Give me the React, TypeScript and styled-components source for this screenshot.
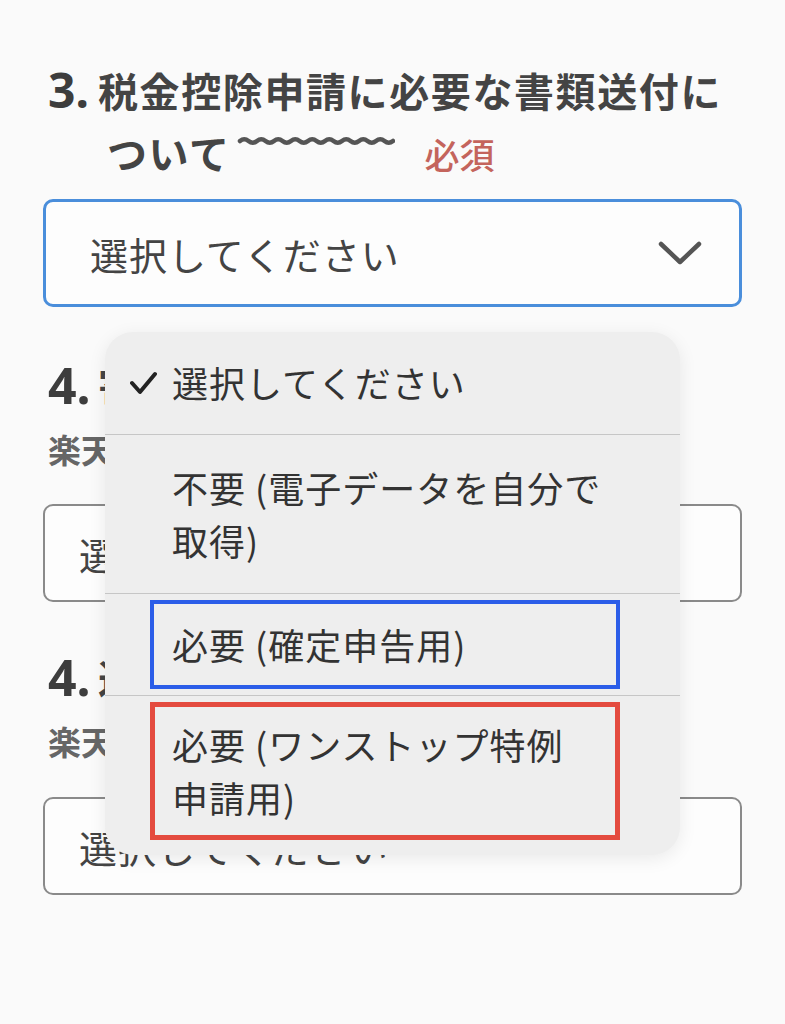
import React from "react";
import styled, { createGlobalStyle } from "styled-components";

const Global = createGlobalStyle`
  html, body { margin: 0; padding: 0; background: #fafafa; }
  body { font-family: "Noto Sans CJK JP", "Noto Sans", sans-serif; color: #444; }
`;

const Page = styled.div`
  position: relative;
  width: 785px;
  min-height: 1024px;
  box-sizing: border-box;
  padding: 59px 43px 0 43px;
  background: #fafafa;
`;

const Heading = styled.div<{ $mt?: number }>`
  display: flex;
  align-items: flex-start;
  line-height: 62px;
  margin-top: ${(p) => p.$mt ?? 0}px;
`;

const Num = styled.span<{ $size?: number }>`
  flex: 0 0 50px;
  padding-left: 5px;
  font-family: "Noto Sans", "Noto Sans CJK JP", sans-serif;
  font-size: ${(p) => p.$size ?? 48}px;
  font-weight: 700;
  color: #3d3d3d;
`;

const Title = styled.div`
  font-size: 40px;
  font-weight: 700;
  letter-spacing: 1.6px;
  color: #444;
  white-space: nowrap;
`;

const Line = styled.span`
  padding-left: 9px;
`;

const Wave = styled.svg`
  display: inline-block;
  vertical-align: 22px;
  margin-left: 6px;
`;

const Required = styled.span`
  margin-left: 30px;
  font-size: 35px;
  font-weight: 500;
  letter-spacing: 0;
  color: #c4645c;
`;

const Sub = styled.div`
  margin-top: 10px;
  padding-left: 5px;
  line-height: 46px;
  font-size: 33px;
  font-weight: 700;
  color: #666;
  white-space: nowrap;
`;

const Select = styled.div<{ $active?: boolean; $mt: number }>`
  box-sizing: border-box;
  height: ${(p) => (p.$active ? 108 : 98)}px;
  margin-top: ${(p) => p.$mt}px;
  border: ${(p) => (p.$active ? "3px solid #4a8edb" : "2px solid #8a8a8a")};
  border-radius: 10px;
  background: #fdfdfd;
  display: flex;
  align-items: center;
  justify-content: space-between;
  padding: 0 37px 0 ${(p) => (p.$active ? 44 : 34)}px;
  font-size: 38px;
  letter-spacing: 1px;
  color: #444;
`;

const Menu = styled.div`
  position: absolute;
  left: 105px;
  top: 332px;
  width: 575px;
  background: #eeeeee;
  border-radius: 28px;
  overflow: hidden;
  box-shadow: 0 4px 18px rgba(0, 0, 0, 0.08);
  padding-bottom: 15px;
  font-size: 36px;
  letter-spacing: 1px;
  color: #333;
`;

const Option = styled.div<{ $first?: boolean; $pad: string }>`
  display: flex;
  align-items: center;
  line-height: 53px;
  padding: ${(p) => p.$pad};
  border-top: ${(p) => (p.$first ? "none" : "1px solid #c6c6c6")};
`;

const Check = styled.svg`
  flex: 0 0 auto;
  margin-right: 15px;
`;

const Frame = styled.div<{ $color: string; $bw: number; $py: number }>`
  flex: 1;
  border: ${(p) => p.$bw}px solid ${(p) => p.$color};
  padding: ${(p) => p.$py}px ${(p) => 22 - p.$bw}px;
`;

const wavePath = (() => {
  let d = "M3 6";
  for (let i = 0; i < 9; i++) d += " q4.25 -3.5 8.5 0 q4.25 3.5 8.5 0";
  return d;
})();

const Chevron = () => (
  <svg width="44" height="24" viewBox="0 0 44 24">
    <polyline points="3,3 22,21 41,3" fill="none" stroke="#555" strokeWidth="4.5" strokeLinecap="round" strokeLinejoin="round" />
  </svg>
);

export default function App() {
  return (
    <>
      <Global />
      <Page>
        <Heading>
          <Num>3.</Num>
          <Title>
            税金控除申請に必要な書類送付に
            <br />
            <Line>ついて</Line>
            <Wave width="158" height="12" viewBox="0 0 158 12">
              <path d={wavePath} fill="none" stroke="#555" strokeWidth="4.5" strokeLinecap="round" />
            </Wave>
            <Required>必須</Required>
          </Title>
        </Heading>
        <Select $active $mt={14}>
          <span>選択してください</span>
          <Chevron />
        </Select>

        <Heading $mt={47}>
          <Num $size={50}>4.</Num>
          <Title>寄付金受領証明書</Title>
        </Heading>
        <Sub>楽天ポイントの利用</Sub>
        <Select $mt={32}>
          <span>選択してください</span>
        </Select>

        <Heading $mt={44}>
          <Num $size={50}>4.</Num>
          <Title>返礼品の配送</Title>
        </Heading>
        <Sub>楽天ポイントの利用</Sub>
        <Select $mt={33}>
          <span>選択してください</span>
        </Select>

        <Menu>
          <Option $first $pad="24px 20px 25px 25px">
            <Check width="27" height="24" viewBox="0 0 27 24">
              <polyline points="2,12 10,21 25,3" fill="none" stroke="#222" strokeWidth="4" strokeLinecap="round" strokeLinejoin="round" />
            </Check>
            <span>選択してください</span>
          </Option>
          <Option $pad="26px 20px 26px 67px">
            <span>
              不要 (電子データを自分で
              <br />
              取得)
            </span>
          </Option>
          <Option $pad="6px 60px 6px 45px">
            <Frame $color="#2b5de8" $bw={4} $py={14}>
              必要 (確定申告用)
            </Frame>
          </Option>
          <Option $pad="6px 60px 0 45px">
            <Frame $color="#e44b3f" $bw={5} $py={11}>
              必要 (ワンストップ特例
              <br />
              申請用)
            </Frame>
          </Option>
        </Menu>
      </Page>
    </>
  );
}
